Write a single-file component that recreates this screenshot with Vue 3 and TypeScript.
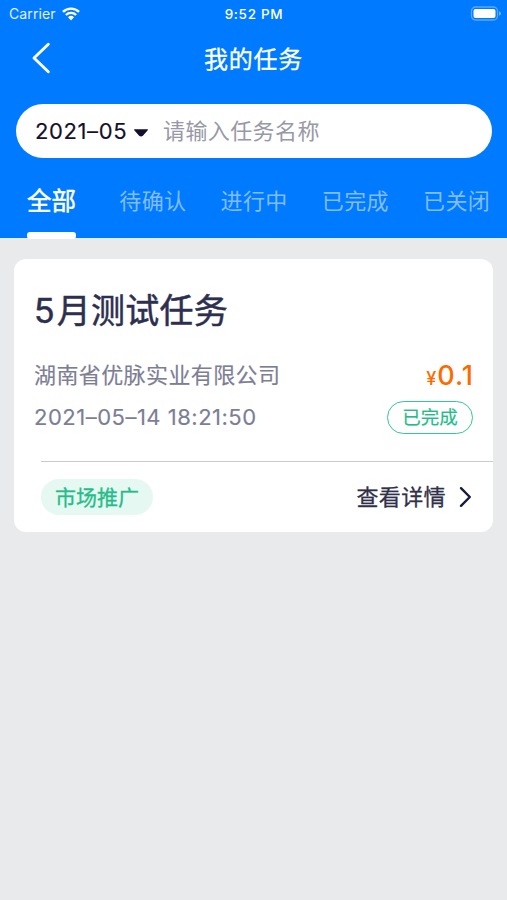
<script setup lang="ts">
import { ref } from 'vue'

interface Task {
  title: string
  company: string
  time: string
  amount: string
  status: string
  category: string
}

const tabs: string[] = ['全部', '待确认', '进行中', '已完成', '已关闭']
const active = ref(0)
const month = ref('2021–05')
const keyword = ref('')
const tasks = ref<Task[]>([
  {
    title: '5月测试任务',
    company: '湖南省优脉实业有限公司',
    time: '2021–05–14 18:21:50',
    amount: '0.1',
    status: '已完成',
    category: '市场推广',
  },
])
</script>

<template>
  <div class="page">
    <header class="header">
      <div class="status-bar">
        <div class="carrier">
          <span>Carrier</span>
          <svg class="wifi" viewBox="0 0 18 14" width="18" height="14">
            <g fill="none" stroke="#fff" stroke-width="2.4">
              <path d="M1 4.9a11.3 11.3 0 0 1 16 0" />
              <path d="M3.9 8a7.2 7.2 0 0 1 10.2 0" />
            </g>
            <path d="M6 10.3a4.3 4.3 0 0 1 6 0L9 13.4z" fill="#fff" />
          </svg>
        </div>
        <span class="clock">9:52 PM</span>
        <svg class="battery" viewBox="0 0 31 15" width="31" height="15">
          <rect x="1.5" y="1" width="26" height="13" rx="4" fill="none" stroke="#fff" stroke-opacity=".35" stroke-width="1.3" />
          <rect x="3.5" y="3" width="22" height="9" rx="2" fill="#fff" />
          <path d="M29 5.3Q31 6 31 7.5T29 9.7z" fill="#fff" fill-opacity=".45" />
        </svg>
      </div>
      <div class="nav">
        <svg class="back" viewBox="0 0 20 32" width="20" height="32">
          <path d="M17.3 2.3L3 16l14.300 13.700" fill="none" stroke="#fff" stroke-width="2.900" stroke-linecap="round" stroke-linejoin="round" />
        </svg>
        <h1>我的任务</h1>
      </div>
      <div class="search">
        <button class="month" type="button">
          <span>{{ month }}</span>
          <svg viewBox="0 0 16 10" width="16" height="10">
            <path d="M1.400 1.200h13.200q.7.500.1 1.100L9.900 7.700q-1.900 1.500-3.800 0L1.300 2.300Q.7 1.700 1.400 1.200z" fill="#140f2d" />
          </svg>
        </button>
        <input v-model="keyword" class="keyword" placeholder="请输入任务名称" />
      </div>
      <nav class="tabs">
        <button
          v-for="(tab, i) in tabs"
          :key="tab"
          type="button"
          class="tab"
          :class="{ active: active === i }"
          @click="active = i"
        >{{ tab }}</button>
      </nav>
    </header>

    <main class="list">
      <article v-for="task in tasks" :key="task.title" class="card">
        <h2>{{ task.title }}</h2>
        <div class="row first">
          <span class="company">{{ task.company }}</span>
          <span class="amount"><small>¥</small>{{ task.amount }}</span>
        </div>
        <div class="row second">
          <span class="time">{{ task.time }}</span>
          <span class="badge">{{ task.status }}</span>
        </div>
        <footer class="footer">
          <span class="tag">{{ task.category }}</span>
          <a class="detail">
            <span>查看详情</span>
            <svg viewBox="0 0 13 22" width="13" height="22">
              <path d="M2 2.200L10.800 11 2 19.800" fill="none" stroke="#161a40" stroke-width="2.400" stroke-linecap="round" stroke-linejoin="round" />
            </svg>
          </a>
        </footer>
      </article>
    </main>
  </div>
</template>

<style>
body {
  background: #e8eaec;
}
</style>

<style scoped>
.page {
  min-height: 900px;
  background: #e8eaec;
  font-family: Inter, "Noto Sans CJK SC", sans-serif;
  overflow: hidden;
}
.page * {
  box-sizing: border-box;
}
h1,
h2 {
  margin: 0;
}
svg {
  display: block;
  flex: none;
}
button,
input {
  font-family: inherit;
  border: 0;
  padding: 0;
  background: none;
  outline: 0;
}
.header {
  height: 238px;
  background: #007aff;
  color: #fff;
}
.status-bar {
  display: grid;
  grid-template-columns: 1fr auto 1fr;
  align-items: center;
  height: 27px;
  padding: 0 6px 0 9px;
}
.carrier {
  display: flex;
  align-items: center;
  gap: 6px;
  font-size: 14px;
  letter-spacing: 0.1px;
  color: #e4f1ff;
}
.clock {
  margin-right: 2px;
  font-size: 13.5px;
  font-weight: 500;
  letter-spacing: 0.7px;
}
.battery {
  justify-self: end;
}
.nav {
  display: grid;
  grid-template-columns: 1fr auto 1fr;
  align-items: center;
  height: 62px;
  padding: 0 31px;
}
h1 {
  padding-top: 3px;
  font-size: 24px;
  line-height: 36px;
  letter-spacing: 0.7px;
  font-weight: 400;
  -webkit-text-stroke: 0.3px currentColor;
}
.search {
  display: flex;
  align-items: center;
  height: 54px;
  margin: 15px 15px 0 16px;
  padding-left: 19px;
  border-radius: 27px;
  background: #fff;
}
.month {
  display: flex;
  align-items: center;
  gap: 6px;
  width: 128px;
  font-size: 22px;
  font-weight: 400;
  letter-spacing: 0.6px;
  color: #140f2d;
  -webkit-text-stroke: 0.15px currentColor;
}
.month span {
  margin-top: -1px;
}
.month svg {
  margin-top: 3px;
}
.keyword {
  flex: 1;
  min-width: 0;
  height: 36px;
  font-size: 22px;
  letter-spacing: 0.4px;
}
.keyword::placeholder {
  color: #9799a5;
}
.tabs {
  display: flex;
  justify-content: space-between;
  height: 81px;
  padding: 0 17px 0 27px;
}
.tab {
  display: flex;
  flex-direction: column;
  justify-content: space-between;
  padding-top: 26px;
  font-size: 22px;
  line-height: 34px;
  letter-spacing: 0.3px;
  color: #82bdff;
}
.tab.active {
  font-size: 24.5px;
  color: #fff;
  letter-spacing: 0;
  margin-right: 9px;
  -webkit-text-stroke: 0.5px currentColor;
}
.tab.active::after {
  content: "";
  width: 49px;
  height: 7px;
  border-radius: 3px;
  background: #fff;
}
.list {
  padding: 21px 14px;
}
.card {
  height: 273px;
  padding-top: 26px;
  border-radius: 12px;
  background: #fff;
}
h2 {
  padding-left: 20px;
  font-size: 34px;
  line-height: 52px;
  letter-spacing: 0.3px;
  font-weight: 400;
  color: #2d2f4f;
  -webkit-text-stroke: 0.5px currentColor;
}
h2::first-letter {
  letter-spacing: 2px;
}
.row {
  display: flex;
  justify-content: space-between;
  align-items: center;
  padding: 0 20px;
  color: #7c7e95;
}
.first {
  height: 42px;
  margin-top: 17px;
}
.second {
  height: 42px;
}
.company {
  margin-top: -5px;
  font-size: 22px;
  letter-spacing: 0.4px;
  -webkit-text-stroke: 0.15px currentColor;
}
.amount {
  font-size: 27px;
  font-weight: 500;
  letter-spacing: 1px;
  margin-right: -1px;
  color: #ff6a00;
}
.amount small {
  font-size: 18px;
}
.time {
  font-size: 22px;
  font-weight: 400;
  letter-spacing: 0.5px;
  -webkit-text-stroke: 0.15px currentColor;
}
.badge {
  width: 86px;
  height: 33px;
  border: 1.5px solid #35c696;
  border-radius: 17px;
  font-size: 18.5px;
  line-height: 31px;
  text-align: center;
  color: #24bd89;
  -webkit-text-stroke: 0.2px currentColor;
}
.footer {
  display: flex;
  justify-content: space-between;
  align-items: center;
  height: 71px;
  margin: 23px 0 0 27px;
  padding-right: 21px;
  border-top: 1px solid #c9cacc;
}
.tag {
  width: 112px;
  height: 36px;
  border-radius: 18px;
  background: #e6f8f2;
  font-size: 21px;
  line-height: 37px;
  text-align: center;
  color: #24bd89;
  -webkit-text-stroke: 0.3px currentColor;
}
.detail {
  display: flex;
  align-items: center;
  gap: 13px;
  font-size: 22px;
  letter-spacing: 0.4px;
  color: #303149;
  -webkit-text-stroke: 0.3px currentColor;
}
.detail span {
  margin-top: -4px;
}
</style>
